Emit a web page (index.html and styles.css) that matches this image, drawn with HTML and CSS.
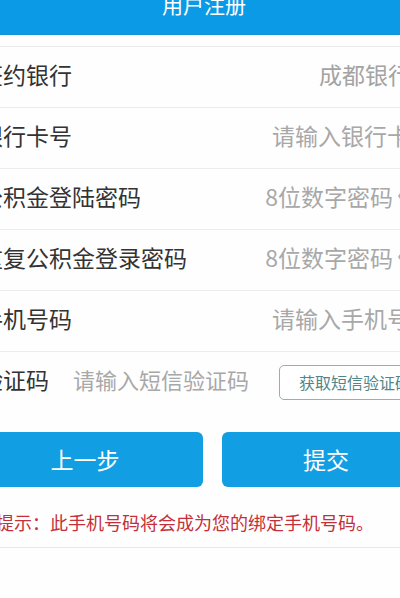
FILE: index.html
```html
<!doctype html>
<html lang="zh-CN">
<head>
    <meta charset="UTF-8">
    <meta name="viewport" content="width=device-width, initial-scale=1.0">
    <title>用户注册</title>
    <link rel="stylesheet" href="styles.css">
</head>
<body>
<div class="screen">
    <header class="topbar">
        <h1 class="topbar__title">用户注册</h1>
    </header>
    <form class="reg-form">
        <ul class="reg-form__list">
            <li class="reg-form__item">
                <label>签约银行</label>
                <span class="reg-form__value reg-form__value--filled">成都银行</span>
                <span class="reg-form__arrow">›</span>
            </li>
            <li class="reg-form__item">
                <label for="card">银行卡号</label>
                <input class="reg-form__input" type="text" id="card" placeholder="请输入银行卡号">
            </li>
            <li class="reg-form__item">
                <label for="pass">公积金登陆密码</label>
                <input class="reg-form__input reg-form__input--short" type="password" id="pass" placeholder="8位数字密码">
                <svg class="reg-form__eye" width="22" height="22" viewBox="0 0 22 22">
                    <path d="M2 11c2.5-4 5.5-6 9-6s6.5 2 9 6c-2.5 4-5.5 6-9 6s-6.5-2-9-6z" fill="none" stroke="#b0b0b0" stroke-width="1.6"/>
                    <circle cx="11" cy="11" r="3" fill="#b0b0b0"/>
                </svg>
            </li>
            <li class="reg-form__item">
                <label for="pass2">重复公积金登录密码</label>
                <input class="reg-form__input reg-form__input--short" type="password" id="pass2" placeholder="8位数字密码">
                <svg class="reg-form__eye" width="22" height="22" viewBox="0 0 22 22">
                    <path d="M2 11c2.5-4 5.5-6 9-6s6.5 2 9 6c-2.5 4-5.5 6-9 6s-6.5-2-9-6z" fill="none" stroke="#b0b0b0" stroke-width="1.6"/>
                    <circle cx="11" cy="11" r="3" fill="#b0b0b0"/>
                </svg>
            </li>
            <li class="reg-form__item">
                <label for="phone">手机号码</label>
                <input class="reg-form__input" type="text" id="phone" placeholder="请输入手机号码">
            </li>
            <li class="reg-form__item">
                <label for="code">验证码</label>
                <input class="reg-form__input reg-form__input--code" type="text" id="code" placeholder="请输入短信验证码">
                <button class="reg-form__sms" type="button">获取短信验证码</button>
            </li>
        </ul>
        <div class="reg-form__actions">
            <button class="reg-form__btn reg-form__btn--back" type="button">上一步</button>
            <button class="reg-form__btn" type="submit">提交</button>
        </div>
        <p class="reg-form__tip">提示：此手机号码将会成为您的绑定手机号码。</p>
    </form>
</div>
</body>
</html>
```

FILE: styles.css
```css
body {
    margin: 0;
    overflow: hidden;
    background: #fefefe;
    font-family: "Noto Sans CJK SC", "Noto Sans", sans-serif;
}

.screen {
    width: 490px;
    margin-left: -40px;
}

.topbar {
    height: 61px;
    margin-top: -26px;
    background: #0b9be6;
    border-bottom: 1px solid #1190d2;
    box-sizing: border-box;
    display: flex;
    align-items: center;
    justify-content: center;
}

.topbar__title {
    margin: 0 0 0 -2px;
    font-size: 21px;
    font-weight: normal;
    color: #fff;
    line-height: 1;
}

.reg-form {
    margin: 0;
}

.reg-form__list {
    list-style: none;
    margin: 11px 0 0 0;
    padding: 0;
}

.reg-form__item {
    box-sizing: border-box;
    height: 61px;
    border-top: 1px solid #ececec;
    padding: 0 17px 6px 20px;
    display: flex;
    align-items: center;
    font-size: 23px;
    color: #333;
}

.reg-form__item label {
    white-space: nowrap;
}

.reg-form__value {
    margin-left: auto;
    color: #a3a3a3;
}

.reg-form__arrow {
    width: 22px;
    text-align: right;
    color: #c4c4c4;
}

.reg-form__input {
    margin-left: auto;
    width: 170px;
    border: 0;
    padding: 0;
    background: transparent;
    font: inherit;
    text-align: right;
    outline: none;
}

.reg-form__input::placeholder {
    color: #a8a8a8;
}

.reg-form__input--short {
    width: 140px;
}

.reg-form__eye {
    margin: 0 14px 0 4px;
    flex-shrink: 0;
}

.reg-form__input--code {
    margin-left: 24px;
    width: 180px;
    font-size: 22px;
    text-align: left;
}

.reg-form__sms {
    margin: 6px 0 0 26px;
    height: 35px;
    padding: 0 19px;
    border: 1px solid #86b6b9;
    border-radius: 5px;
    background: #fff;
    color: #4f8689;
    font-family: inherit;
    font-size: 16px;
    white-space: nowrap;
}

.reg-form__actions {
    margin-top: 20px;
    padding-left: 7px;
    display: grid;
    grid-template-columns: 236px 208px;
    gap: 19px;
}

.reg-form__btn {
    height: 55px;
    border: 0;
    border-radius: 6px;
    padding-bottom: 3px;
    background: #129ee3;
    color: #fff;
    font-family: inherit;
    font-size: 23px;
}

.reg-form__tip {
    margin: 23px 0 0 0;
    padding: 0 0 12px 36px;
    border-bottom: 1px solid #e8e8e8;
    font-size: 18px;
    line-height: 25px;
    color: #c4303a;
    white-space: nowrap;
}
```
